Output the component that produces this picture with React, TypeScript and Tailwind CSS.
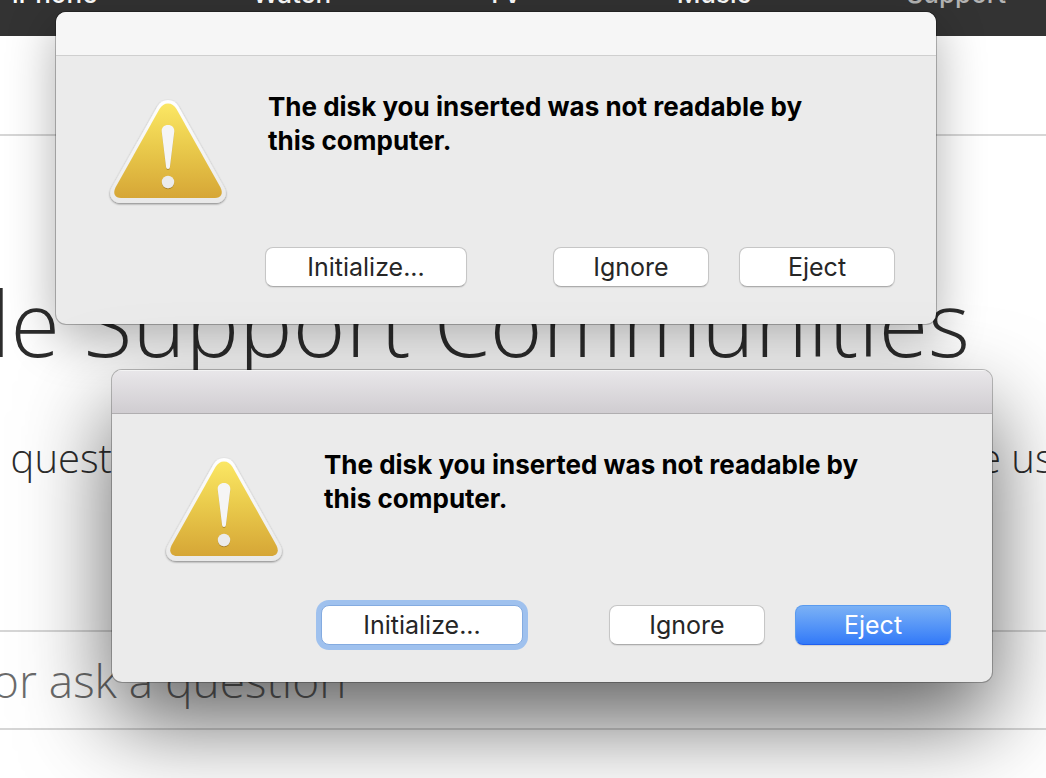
import React from 'react';

const navLinks = [
  { name: 'iPhone', active: false },
  { name: 'Watch', active: false },
  { name: 'TV', active: false },
  { name: 'Music', active: false },
  { name: 'Support', active: true }
];

const WarningIcon = ({ id }: { id: string }) => (
  <svg viewBox="0 0 120 112" className="w-[120px] h-[112px] shrink-0" role="img" aria-label="Warning">
    <defs>
      <linearGradient id={`${id}-fill`} x1="0" y1="0" x2="0" y2="1">
        <stop offset="0" stopColor="#fbe764" />
        <stop offset="0.45" stopColor="#eacb4c" />
        <stop offset="1" stopColor="#d6a636" />
      </linearGradient>
      <linearGradient id={`${id}-edge`} x1="0" y1="0" x2="0" y2="1">
        <stop offset="0" stopColor="#ffffff" />
        <stop offset="1" stopColor="#e9e9e9" />
      </linearGradient>
      <filter id={`${id}-shadow`} x="-10%" y="-10%" width="120%" height="120%">
        <feDropShadow dx="0" dy="1" stdDeviation="1" floodColor="#000" floodOpacity="0.45" />
      </filter>
      <filter id={`${id}-mark`} x="-20%" y="-10%" width="140%" height="120%">
        <feDropShadow dx="0" dy="1" stdDeviation="0.7" floodColor="#7a5a10" floodOpacity="0.5" />
      </filter>
    </defs>
    <path
      d="M60 3C64.500 3 68 5 70.500 9.200L116.300 90.500C120.500 98.500 115.500 106 107.500 106H12.500C4.500 106 -0.500 98.500 3.700 90.500L49.500 9.200C52 5 55.500 3 60 3Z"
      fill={`url(#${id}-edge)`}
      filter={`url(#${id}-shadow)`}
    />
    <path
      d="M60 6.500C63.500 6.500 66.500 8.500 68.500 12L112.500 90.500C115.500 96.500 113 101 107 101H13C7 101 4.500 96.500 7.500 90.500L51.500 12C53.500 8.500 56.500 6.500 60 6.500Z"
      fill={`url(#${id}-fill)`}
    />
    <g fill="#f5f5f5" filter={`url(#${id}-mark)`}>
      <path d="M60 28C64 28 66.500 30.500 66.300 34.500L61.900 70C61.600 72.600 58.400 72.600 58.100 70L53.700 34.500C53.500 30.500 56 28 60 28Z" />
      <circle cx="60" cy="85" r="6.200" fill="#ebebeb" />
    </g>
  </svg>
);

const plainButton = 'border-[#c6c6c6] border-b-[#acacac] bg-white text-[#262626] shadow-[0_1px_1px_rgba(0,0,0,0.08)]';
const focusedButton = 'border-[#84abe0] bg-white text-[#262626] ring-[5px] ring-[#9fc1ee]';
const defaultButton =
  'border-[#5a9bef] border-b-[#1f5ff0] bg-linear-to-b from-[#7bb1f5] to-[#3279f8] text-white shadow-[0_1px_1px_rgba(0,0,0,0.12)]';

const DiskDialog = ({ id, active, className }: { id: string; active: boolean; className: string }) => {
  const base = 'h-10 rounded-lg border text-[25px] leading-[30px] outline-none';

  return (
    <section
      role="alertdialog"
      aria-labelledby={`${id}-message`}
      className={`absolute w-[880px] rounded-[10px] overflow-hidden bg-[#ebebeb] ${className}`}
    >
      <header
        className={`h-11 border-b ${
          active
            ? 'border-[#b0aeb0] bg-linear-to-b from-[#e9e7ea] to-[#d0cdd1] shadow-[inset_0_1px_0_#f4f4f4]'
            : 'border-[#cfcfcf] bg-[#f6f6f6]'
        }`}
      />
      <div className="flex gap-10 pl-[52px] pt-[34px]">
        <div className="pt-[7px]">
          <WarningIcon id={id} />
        </div>
        <h2 id={`${id}-message`} className="max-w-[580px] text-[26px] leading-[34px] font-bold text-black">
          The disk you inserted was not readable by this computer.
        </h2>
      </div>
      <div className="flex gap-[30px] pl-[209px] pr-[41px] pt-[38px] pb-[37px]">
        <button className={`${base} w-[202px] mr-auto ${active ? focusedButton : plainButton}`}>Initialize...</button>
        <button className={`${base} w-[156px] ${plainButton}`}>Ignore</button>
        <button className={`${base} w-[156px] ${active ? defaultButton : plainButton}`}>Eject</button>
      </div>
    </section>
  );
};

export default function App() {
  return (
    <div className="relative min-h-screen overflow-hidden bg-white font-['Inter',sans-serif]">
      <nav className="h-9 overflow-hidden bg-[#333333]">
        <div className="-mt-6 flex gap-[155px] pl-3 text-[26px] leading-9 font-medium">
          {navLinks.map((link) => (
            <a key={link.name} href="#" className={link.active ? 'text-[#b4b4b4]' : 'text-white'}>
              {link.name}
            </a>
          ))}
        </div>
      </nav>

      <main className="font-['Open_Sans',sans-serif] font-light text-[#2d2d2d]">
        <div className="h-[100px] border-b-2 border-[#d6d6d6]" />
        <div className="flex justify-end overflow-hidden pt-[118px] pr-[76px]">
          <h1 className="whitespace-nowrap text-[90px] leading-[136px]">Apple Support Communities</h1>
        </div>
        <div className="flex justify-between overflow-hidden pt-10 text-[40px] leading-[56px] whitespace-nowrap">
          <p className="w-[112px] flex justify-end">Ask a quest</p>
          <p className="w-[67px]">e users</p>
        </div>
        <label className="mt-[144px] flex h-[100px] items-center overflow-hidden border-y-2 border-[#d6d6d6]">
          <span className="sr-only">Search or ask a question</span>
          <input
            type="text"
            defaultValue="or ask a question"
            className="-ml-2 w-full bg-transparent text-[46px] leading-[60px] font-light text-[#6b6b6b] outline-none"
          />
        </label>
      </main>

      <DiskDialog
        id="disk-a"
        active={false}
        className="left-14 top-3 shadow-[0_0_0_1px_rgba(0,0,0,0.25),0_14px_50px_rgba(0,0,0,0.32)]"
      />
      <DiskDialog
        id="disk-b"
        active
        className="left-28 top-[370px] shadow-[0_0_0_1px_rgba(0,0,0,0.25),0_40px_90px_rgba(0,0,0,0.62)]"
      />
    </div>
  );
}
